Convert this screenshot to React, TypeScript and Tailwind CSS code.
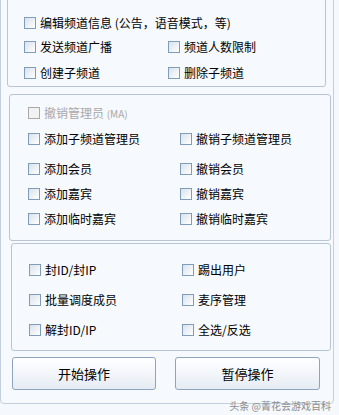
import React from 'react';

interface Opt {
  label: React.ReactNode;
  disabled?: boolean;
}

function Check({ label, disabled }: Opt) {
  return (
    <div className="flex h-[20px] items-center gap-[4px]">
      <span
        className={
          disabled
            ? 'h-[12px] w-[12px] shrink-0 border border-[#a9a9a9] bg-[#f2f2f2]'
            : 'h-[12px] w-[12px] shrink-0 border border-[#7f9db9] bg-gradient-to-br from-[#d9e2ec] to-white'
        }
      />
      <span className={disabled ? 'whitespace-nowrap text-[#a8a8a8]' : 'whitespace-nowrap text-black'}>
        {label}
      </span>
    </div>
  );
}

export default function App() {
  return (
    <div
      className="relative h-[415px] w-[339px] overflow-hidden bg-[#f5f8fc] text-[12px] leading-none [text-spacing-trim:space-all]"
      style={{ fontFamily: '"Noto Sans CJK SC", "Liberation Sans", sans-serif' }}
    >
      {/* outer frame, top cut off */}
      <div className="mt-[-20px] w-[334px] rounded-b-[4px] border border-[#c3cfdd] bg-[#f6f9fd] pb-[13px]">
        {/* channel group */}
        <div className="ml-[6px] mt-[9px] w-[319px] rounded-[3px] border border-[#b7c5d7] pb-[3px] pl-[16px] pt-[22px]">
          <Check label="编辑频道信息 (公告，语音模式，等)" />
          <div className="mt-[4px] grid grid-cols-[144px_1fr]">
            <Check label="发送频道广播" />
            <Check label="频道人数限制" />
          </div>
          <div className="mt-[6px] grid grid-cols-[144px_1fr]">
            <Check label="创建子频道" />
            <Check label="删除子频道" />
          </div>
        </div>

        {/* member group */}
        <div className="ml-[8px] mt-[7px] w-[322px] rounded-[3px] border border-[#b7c5d7] pb-[11px] pl-[18px] pt-[8px]">
          <Check
            disabled
            label={
              <>
                撤销管理员 <span className="text-[10px]">(MA)</span>
              </>
            }
          />
          <div className="mt-[6px] grid grid-cols-[152px_1fr] gap-y-[5px]">
            <Check label="添加子频道管理员" />
            <Check label="撤销子频道管理员" />
          </div>
          <div className="mt-[10px] grid grid-cols-[152px_1fr] gap-y-[5px]">
            <Check label="添加会员" />
            <Check label="撤销会员" />
            <Check label="添加嘉宾" />
            <Check label="撤销嘉宾" />
            <Check label="添加临时嘉宾" />
            <Check label="撤销临时嘉宾" />
          </div>
        </div>

        {/* admin group */}
        <div className="ml-[10px] mt-[2px] w-[320px] rounded-[3px] border border-[#b7c5d7] pb-[10px] pl-[17px] pt-[16px]">
          <div className="grid grid-cols-[153px_1fr] gap-y-[10px]">
            <Check label="封ID/封IP" />
            <Check label="踢出用户" />
            <Check label="批量调度成员" />
            <Check label="麦序管理" />
            <Check label="解封ID/IP" />
            <Check label="全选/反选" />
          </div>
        </div>

        <div className="ml-[11px] mt-[6px] flex gap-[19px]">
          <button className="h-[33px] w-[144px] rounded-[3px] border border-[#8fa3bc] bg-gradient-to-b from-white to-[#e6ecf4] text-[13px] text-black">
            开始操作
          </button>
          <button className="h-[33px] w-[145px] rounded-[3px] border border-[#8fa3bc] bg-gradient-to-b from-white to-[#e6ecf4] text-[13px] text-black">
            暂停操作
          </button>
        </div>
      </div>

      <span className="absolute bottom-[4px] right-[8px] whitespace-nowrap text-[10px] text-[#8c8c8c]">
        头条 @菁花会游戏百科
      </span>
    </div>
  );
}
